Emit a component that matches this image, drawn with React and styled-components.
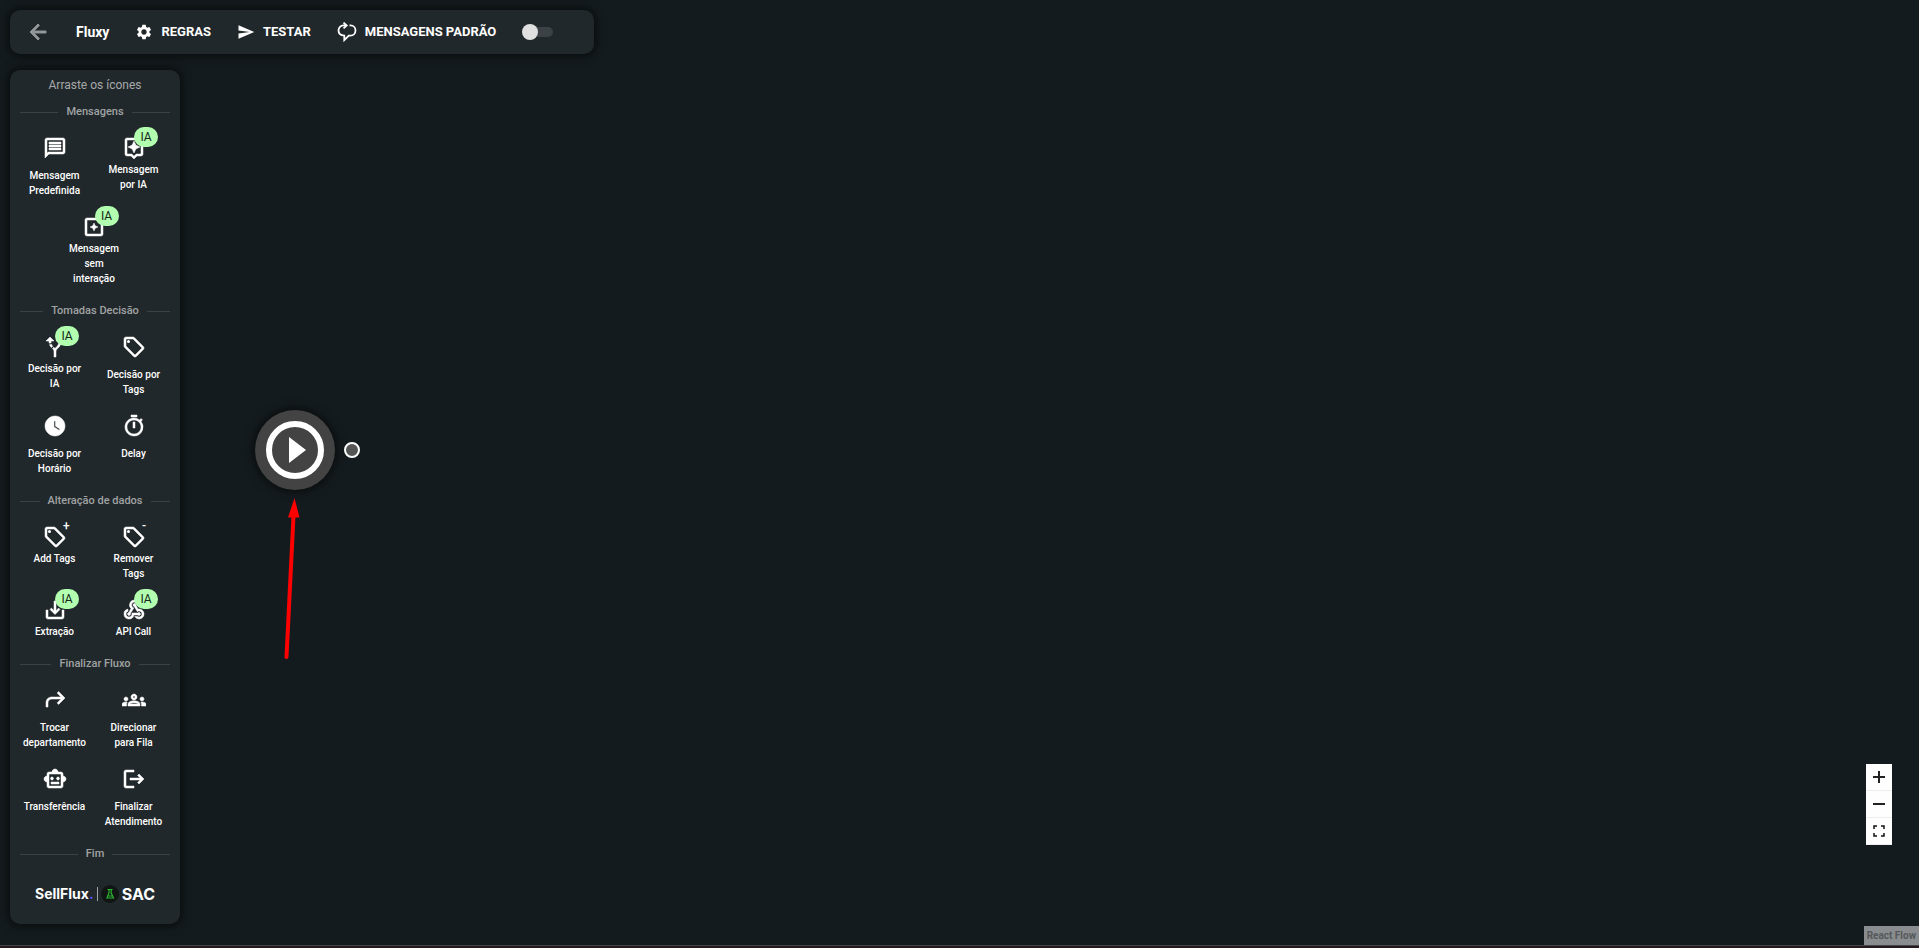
import React, { useState } from "react";
import styled, { createGlobalStyle } from "styled-components";
import {
  MdAltRoute,
  MdArrowBack,
  MdLogout,
  MdOutlineAssistant,
  MdOutlineGroups,
  MdOutlineLocalOffer,
  MdOutlineMessage,
  MdOutlineSmartToy,
  MdOutlineTimer,
  MdSaveAlt,
  MdSend,
  MdSettings,
  MdWatchLater,
  MdWebhook,
} from "react-icons/md";

const GlobalStyle = createGlobalStyle`
  * {
    box-sizing: border-box;
  }
  body {
    margin: 0;
    background-color: #141b1e;
    color: #fff;
    font-family: Roboto, "Liberation Sans", sans-serif;
  }
  button {
    font-family: inherit;
    color: inherit;
    background: none;
    border: none;
    padding: 0;
    cursor: pointer;
  }
`;

const Page = styled.div`
  position: relative;
  display: flex;
  flex-direction: column;
  align-items: flex-start;
  gap: 16px;
  min-height: 100vh;
  padding: 10px 10px 20px;
  border-bottom: 2px solid #241a1e;
  overflow: hidden;
  &:after {
    content: "";
    position: absolute;
    left: 0;
    right: 0;
    bottom: 0;
    height: 1px;
    background-color: #434547;
  }
`;

const Panel = styled.div`
  background-color: #21282b;
  border-radius: 10px;
  box-shadow: 0 0 10px 2px rgba(0, 0, 0, 0.6);
`;

const Toolbar = styled(Panel).attrs({ as: "header" })`
  display: flex;
  align-items: center;
  height: 44px;
  padding: 0 40px 0 16px;
`;

const BackButton = styled.button`
  display: flex;
  color: #929698;
  font-size: 24px;
  margin-right: 26px;
  svg {
    stroke-width: 0;
  }
  path:not([fill="none"]) {
    stroke: currentColor;
    stroke-width: 1px;
  }
`;

const Title = styled.h1`
  margin: 0 26px 0 0;
  font-size: 14px;
  font-weight: 700;
  line-height: 20px;
`;

const ToolButton = styled.button`
  display: flex;
  align-items: center;
  gap: 8px;
  margin-right: 26px;
  font-size: 13px;
  font-weight: 700;
  line-height: 20px;
  text-transform: uppercase;
  svg {
    width: ${(props) => props.$icon || 18}px;
    height: ${(props) => props.$icon || 18}px;
  }
`;

const Switch = styled.input`
  appearance: none;
  position: relative;
  width: 32px;
  height: 16px;
  margin: 0;
  cursor: pointer;
  &:before {
    content: "";
    position: absolute;
    inset: 3px 1px 3px 4px;
    border-radius: 5px;
    background-color: #3b4144;
  }
  &:after {
    content: "";
    position: absolute;
    top: 0;
    left: ${(props) => (props.checked ? 16 : 0)}px;
    width: 16px;
    height: 16px;
    border-radius: 50%;
    background-color: #e0e0e0;
  }
`;

const Sidebar = styled(Panel).attrs({ as: "aside" })`
  width: 170px;
  padding: 5px 10px 0;
`;

const Hint = styled.p`
  margin: 0 0 8px;
  color: #a6a9aa;
  font-size: 12px;
  line-height: 20px;
  text-align: center;
`;

const Divider = styled.h2`
  display: flex;
  align-items: center;
  gap: 8px;
  margin: 0;
  color: #a0a3a4;
  font-size: 11px;
  font-weight: 500;
  line-height: 18px;
  &:before,
  &:after {
    content: "";
    flex: 1;
    height: 1px;
    background-color: #3b4144;
  }
`;

const Group = styled.div`
  display: flex;
  flex-wrap: wrap;
  align-items: flex-start;
  justify-content: center;
  margin: 0 -3px 0 -5px;
  padding-bottom: 14px;
`;

const Item = styled.button`
  position: relative;
  display: flex;
  flex-direction: column;
  align-items: center;
  width: 79px;
  padding: 15px 0 2px;
  cursor: grab;
  > svg {
    width: 24px;
    height: 24px;
    margin-bottom: ${(props) => (props.$tight ? 2 : 8)}px;
    stroke-width: 0;
  }
  path:not([fill="none"]) {
    stroke: currentColor;
    stroke-width: 0.5px;
  }
`;

const ItemLabel = styled.span`
  width: ${(props) => (props.$narrow ? 56 : 66)}px;
  font-size: 10px;
  font-weight: 500;
  line-height: 15px;
  text-align: center;
`;

const Badge = styled.span`
  position: absolute;
  top: 6px;
  left: 40px;
  width: 24px;
  height: 20px;
  border-radius: 10px;
  background-color: #b2ffb0;
  color: #14251a;
  font-size: 12px;
  line-height: 20px;
  text-align: center;
`;

const Mark = styled.span`
  position: absolute;
  top: 6px;
  left: 48px;
  font-size: 12px;
  font-weight: 500;
  line-height: 20px;
`;

const Brand = styled.div`
  display: flex;
  align-items: center;
  justify-content: center;
  gap: 3px;
  height: 61px;
`;

const BrandName = styled.span`
  font-family: Inter, sans-serif;
  font-size: ${(props) => props.$size || 16}px;
  font-weight: 700;
  line-height: 20px;
  i {
    color: #5b4dff;
    font-style: normal;
  }
`;

const BrandRule = styled.span`
  width: 1px;
  height: 14px;
  background-color: #a0a3a4;
`;

const StartNode = styled.button`
  position: absolute;
  top: 410px;
  left: 255px;
  width: 80px;
  height: 80px;
  border-radius: 50%;
  background-color: #434343;
  box-shadow: 0 0 10px 2px rgba(0, 0, 0, 0.6);
  svg {
    display: block;
  }
`;

const Handle = styled.span`
  position: absolute;
  top: 442px;
  left: 344px;
  width: 16px;
  height: 16px;
  border: 2px solid #fff;
  border-radius: 50%;
  background-color: #555;
`;

const Pointer = styled.svg`
  position: absolute;
  top: 496px;
  left: 280px;
`;

const Controls = styled.div`
  position: absolute;
  right: 27px;
  bottom: 101px;
  display: flex;
  flex-direction: column;
  background-color: #fefefe;
`;

const ControlButton = styled.button`
  display: flex;
  align-items: center;
  justify-content: center;
  width: 26px;
  height: 27px;
  border-bottom: 1px solid #eee;
`;

const Attribution = styled.a`
  position: absolute;
  right: 0;
  bottom: 1px;
  padding: 2px 3px;
  background-color: #898d8f;
  color: #55585a;
  font-size: 10px;
  font-weight: 700;
  line-height: 15px;
  text-decoration: none;
`;

const LoopIcon = () => (
  <svg viewBox="0 0 20 20" fill="none" stroke="currentColor" strokeWidth="1.8">
    <path d="M12.5 3.4h1c2.8 0 5 2.2 5 5.1s-2.200 5.100-5 5.100h-1.700l-4.500 4.500v-4.500C3.800 13.300 1.500 11.200 1.500 8.500c0-2.900 2.200-5.100 5-5.100h2.500" />
    <path d="M6.500.6l3.200 2.900-3.200 2.900" />
  </svg>
);

const StarSquareIcon = () => (
  <svg viewBox="0 0 24 24" fill="currentColor">
    <path d="M19 3H5c-1.100 0-2 .9-2 2v14c0 1.100.9 2 2 2h14c1.100 0 2-.9 2-2V5c0-1.100-.9-2-2-2zm0 16H5V5h14v14z" />
    <path d="M12 16l1.200-2.800L16 12l-2.800-1.200L12 8l-1.200 2.800L8 12l2.800 1.200z" />
  </svg>
);

const ForwardIcon = () => (
  <svg viewBox="0 0 24 24" fill="currentColor">
    <path d="M15.600 3.600L22 10l-6.400 6.400-1.500-1.500 3.900-3.900H9c-2.500 0-4 1.400-4 4v4H3v-4c0-3.700 2.400-6 6-6h9l-3.900-3.900z" />
  </svg>
);

const FlaskIcon = () => (
  <svg width="18" height="18" viewBox="0 0 18 18">
    <circle cx="9" cy="9" r="9" fill="#111615" />
    <path
      d="M6.500 4.500h5M8 4.500v3.500L6 13h6.500L10.200 8V4.500M7.500 11h3.500"
      fill="none"
      stroke="#2bb52e"
      strokeWidth="1.200"
    />
  </svg>
);

const groups = [
  {
    title: "Mensagens",
    items: [
      { label: "Mensagem Predefinida", icon: MdOutlineMessage },
      { label: "Mensagem por IA", icon: MdOutlineAssistant, ia: true },
      { label: "Mensagem sem interação", icon: StarSquareIcon, ia: true, narrow: true },
    ],
  },
  {
    title: "Tomadas Decisão",
    items: [
      { label: "Decisão por IA", icon: MdAltRoute, ia: true, narrow: true },
      { label: "Decisão por Tags", icon: MdOutlineLocalOffer },
      { label: "Decisão por Horário", icon: MdWatchLater },
      { label: "Delay", icon: MdOutlineTimer },
    ],
  },
  {
    title: "Alteração de dados",
    items: [
      { label: "Add Tags", icon: MdOutlineLocalOffer, mark: "+" },
      { label: "Remover Tags", icon: MdOutlineLocalOffer, mark: "-", narrow: true },
      { label: "Extração", icon: MdSaveAlt, ia: true },
      { label: "API Call", icon: MdWebhook, ia: true },
    ],
  },
  {
    title: "Finalizar Fluxo",
    items: [
      { label: "Trocar departamento", icon: ForwardIcon },
      { label: "Direcionar para Fila", icon: MdOutlineGroups },
      { label: "Transferência", icon: MdOutlineSmartToy },
      { label: "Finalizar Atendimento", icon: MdLogout },
    ],
  },
];

function PaletteItem({ label, icon: Icon, ia, mark, narrow }) {
  return (
    <Item draggable $tight={ia || mark}>
      <Icon />
      {ia && <Badge>IA</Badge>}
      {mark && <Mark>{mark}</Mark>}
      <ItemLabel $narrow={narrow}>{label}</ItemLabel>
    </Item>
  );
}

export default function App() {
  const [defaults, setDefaults] = useState(false);

  return (
    <Page>
      <GlobalStyle />
      <Toolbar>
        <BackButton aria-label="Voltar">
          <MdArrowBack />
        </BackButton>
        <Title>Fluxy</Title>
        <ToolButton>
          <MdSettings />
          Regras
        </ToolButton>
        <ToolButton>
          <MdSend />
          Testar
        </ToolButton>
        <ToolButton $icon={20}>
          <LoopIcon />
          Mensagens padrão
        </ToolButton>
        <Switch
          type="checkbox"
          role="switch"
          aria-label="Mensagens padrão"
          checked={defaults}
          onChange={() => setDefaults(!defaults)}
        />
      </Toolbar>

      <Sidebar>
        <Hint>Arraste os ícones</Hint>
        {groups.map((group) => (
          <React.Fragment key={group.title}>
            <Divider>{group.title}</Divider>
            <Group>
              {group.items.map((item) => (
                <PaletteItem key={item.label} {...item} />
              ))}
            </Group>
          </React.Fragment>
        ))}
        <Divider>Fim</Divider>
        <Brand>
          <BrandName $size={14}>
            SellFlux<i>.</i>
          </BrandName>
          <BrandRule />
          <FlaskIcon />
          <BrandName>SAC</BrandName>
        </Brand>
      </Sidebar>

      <StartNode aria-label="Início">
        <svg width="80" height="80" viewBox="0 0 80 80">
          <circle cx="40" cy="40" r="26" fill="none" stroke="#fff" strokeWidth="6" />
          <path d="M34 27v26l17-13z" fill="#fff" />
        </svg>
      </StartNode>
      <Handle />
      <Pointer width="32" height="168" viewBox="0 0 32 168">
        <path d="M13.500 20L6.500 161" stroke="#f00" strokeWidth="4" strokeLinecap="round" />
        <path d="M14.500 2L8 21.500h11.500z" fill="#f00" />
      </Pointer>

      <Controls>
        <ControlButton aria-label="Aproximar">
          <svg width="12" height="12" viewBox="0 0 12 12" stroke="#222" strokeWidth="2">
            <path d="M6 0v12M0 6h12" />
          </svg>
        </ControlButton>
        <ControlButton aria-label="Afastar">
          <svg width="12" height="12" viewBox="0 0 12 12" stroke="#222" strokeWidth="2">
            <path d="M0 6h12" />
          </svg>
        </ControlButton>
        <ControlButton aria-label="Ajustar à tela">
          <svg width="12" height="12" viewBox="0 0 12 12" fill="none" stroke="#111" strokeWidth="1.500">
            <path d="M1 4V1h3M8 1h3v3M11 8v3H8M4 11H1V8" />
          </svg>
        </ControlButton>
      </Controls>
      <Attribution href="https://reactflow.dev">React Flow</Attribution>
    </Page>
  );
}
